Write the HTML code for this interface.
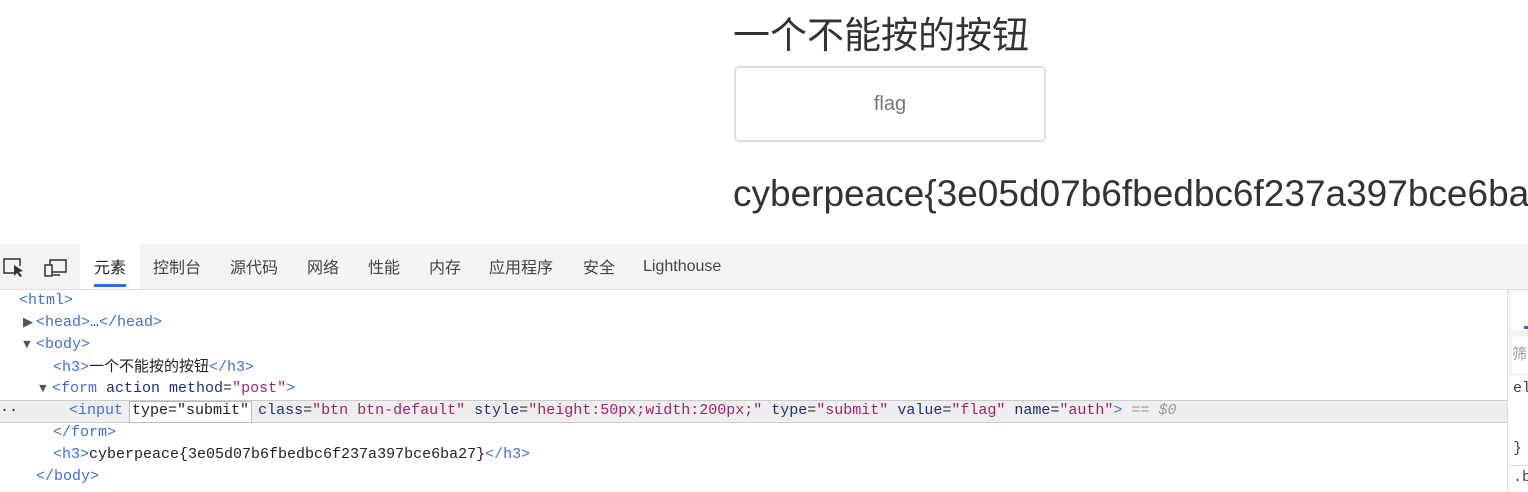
<!DOCTYPE html>
<html><head><meta charset="utf-8"><style>
body{margin:0;width:1528px;height:492px;overflow:hidden;background:#fff;font-family:"Liberation Sans","Noto Sans CJK SC",sans-serif;position:relative}
.a{position:absolute;white-space:nowrap}
.tb{position:absolute;left:0;top:244px;width:1528px;height:45px;background:#f3f3f3;border-bottom:1px solid #ddd}
.tab{position:absolute;top:0;height:45px;line-height:45px;font-size:16px;color:#444;font-family:"Noto Sans CJK SC","Liberation Sans",sans-serif}
.code{position:absolute;left:0;font:15px/22px "Liberation Mono",monospace;white-space:nowrap;color:#1a1aa6}
.code>div{height:22px;overflow:visible}
.t{color:#3f6fd1}.n{color:#1f2f7a}.v{color:#a1246a}.k{color:#222;font-family:"Noto Sans CJK SC",sans-serif;font-size:15px;line-height:20px}
.tri{color:#555;font-size:13px;display:inline-block;width:13px}
</style></head><body>
<div class="a" style="left:733px;top:5px;font-size:37px;color:#333;font-family:'Noto Sans CJK SC',sans-serif">一个不能按的按钮</div>
<div class="a" style="left:734px;top:66px;width:312px;height:76px;border:2px solid #ddd;border-radius:5px;box-sizing:border-box;text-align:center;line-height:72px;font-size:20px;color:#777">flag</div>
<div class="a" style="left:733px;top:173px;font-size:37px;color:#333">cyberpeace{3e05d07b6fbedbc6f237a397bce6ba27}</div>

<div class="tb">
<svg style="position:absolute;left:3px;top:13px" width="22" height="20" viewBox="0 0 22 20"><path d="M12 16H1V2h16v7" fill="none" stroke="#333" stroke-width="1.5"/><path d="M11 8l0 11 3-3 3 4 2-1-3-4 4-1z" fill="#333"/></svg>
<svg style="position:absolute;left:44px;top:15px" width="24" height="18" viewBox="0 0 24 18"><rect x="6" y="1" width="16" height="12" fill="none" stroke="#333" stroke-width="1.5"/><rect x="1" y="6" width="7" height="11" fill="#f3f3f3" stroke="#333" stroke-width="1.5"/><path d="M9 16h7" stroke="#333" stroke-width="1.5"/></svg>
<div class="tab" style="left:80px;width:60px;background:#fff;text-align:center;color:#222">元素<div style="position:absolute;left:14px;bottom:2px;width:32px;height:3px;background:#1a73e8"></div></div>
<div class="tab" style="left:153px">控制台</div>
<div class="tab" style="left:230px">源代码</div>
<div class="tab" style="left:307px">网络</div>
<div class="tab" style="left:368px">性能</div>
<div class="tab" style="left:429px">内存</div>
<div class="tab" style="left:489px">应用程序</div>
<div class="tab" style="left:583px">安全</div>
<div class="tab" style="left:643px;font-family:'Liberation Sans',sans-serif">Lighthouse</div>
</div>

<div class="a" style="left:0;top:400px;width:1507px;height:23px;background:#eee;border-top:1px solid #ccc;border-bottom:1px solid #ccc;box-sizing:border-box"></div>
<div class="a" style="left:129px;top:401px;width:121px;height:20px;border:1px solid #bbb;background:#fff"></div>
<div class="code" style="top:290px">
<div style="padding-left:19px"><span class="t">&lt;html&gt;</span></div>
<div style="padding-left:23px"><span class="tri">▶</span><span class="t">&lt;head&gt;</span><span style="color:#333">…</span><span class="t">&lt;/head&gt;</span></div>
<div style="padding-left:23px"><span class="tri">▼</span><span class="t">&lt;body&gt;</span></div>
<div style="padding-left:53px"><span class="t">&lt;h3&gt;</span><span class="k">一个不能按的按钮</span><span class="t">&lt;/h3&gt;</span></div>
<div style="padding-left:39px"><span class="tri">▼</span><span class="t">&lt;form </span><span class="n">action method</span><span style="color:#333">=</span><span class="v">"post"</span><span class="t">&gt;</span></div>
<div style="padding-left:0"><span style="color:#333">··</span><span style="padding-left:51px" class="t">&lt;input </span><span style="color:#222">type="submit"</span> <span class="n">class</span><span style="color:#333">=</span><span class="v">"btn btn-default"</span> <span class="n">style</span><span style="color:#333">=</span><span class="v">"height:50px;width:200px;"</span> <span class="n">type</span><span style="color:#333">=</span><span class="v">"submit"</span> <span class="n">value</span><span style="color:#333">=</span><span class="v">"flag"</span> <span class="n">name</span><span style="color:#333">=</span><span class="v">"auth"</span><span class="t">&gt;</span> <i style="color:#999">== $0</i></div>
<div style="padding-left:53px"><span class="t">&lt;/form&gt;</span></div>
<div style="padding-left:53px"><span class="t">&lt;h3&gt;</span><span style="color:#222">cyberpeace{3e05d07b6fbedbc6f237a397bce6ba27}</span><span class="t">&lt;/h3&gt;</span></div>
<div style="padding-left:36px"><span class="t">&lt;/body&gt;</span></div>
</div>

<div class="a" style="left:1507px;top:290px;width:21px;height:202px;background:#fff;border-left:1px solid #ddd"></div>
<div class="a" style="left:1508px;top:290px;width:20px;height:42px;background:#f3f3f3"></div>
<div class="a" style="left:1511px;top:292px;width:17px;height:38px;background:#fff"></div>
<div class="a" style="left:1524px;top:326px;width:4px;height:3px;background:#1a73e8"></div>
<div class="a" style="left:1508px;top:332px;width:20px;height:44px;background:#f3f3f3"></div>
<div class="a" style="left:1512px;top:337px;width:16px;height:36px;background:#fff;font-size:15px;line-height:36px;color:#999;overflow:hidden">筛</div>
<div class="a" style="left:1513px;top:380px;font:15px 'Liberation Mono',monospace;color:#444">el</div>
<div class="a" style="left:1513px;top:440px;font:15px 'Liberation Mono',monospace;color:#444">}</div>
<div class="a" style="left:1508px;top:465px;width:20px;height:1px;background:#ddd"></div>
<div class="a" style="left:1513px;top:469px;font:15px 'Liberation Mono',monospace;color:#444">.b</div>
</body></html>
